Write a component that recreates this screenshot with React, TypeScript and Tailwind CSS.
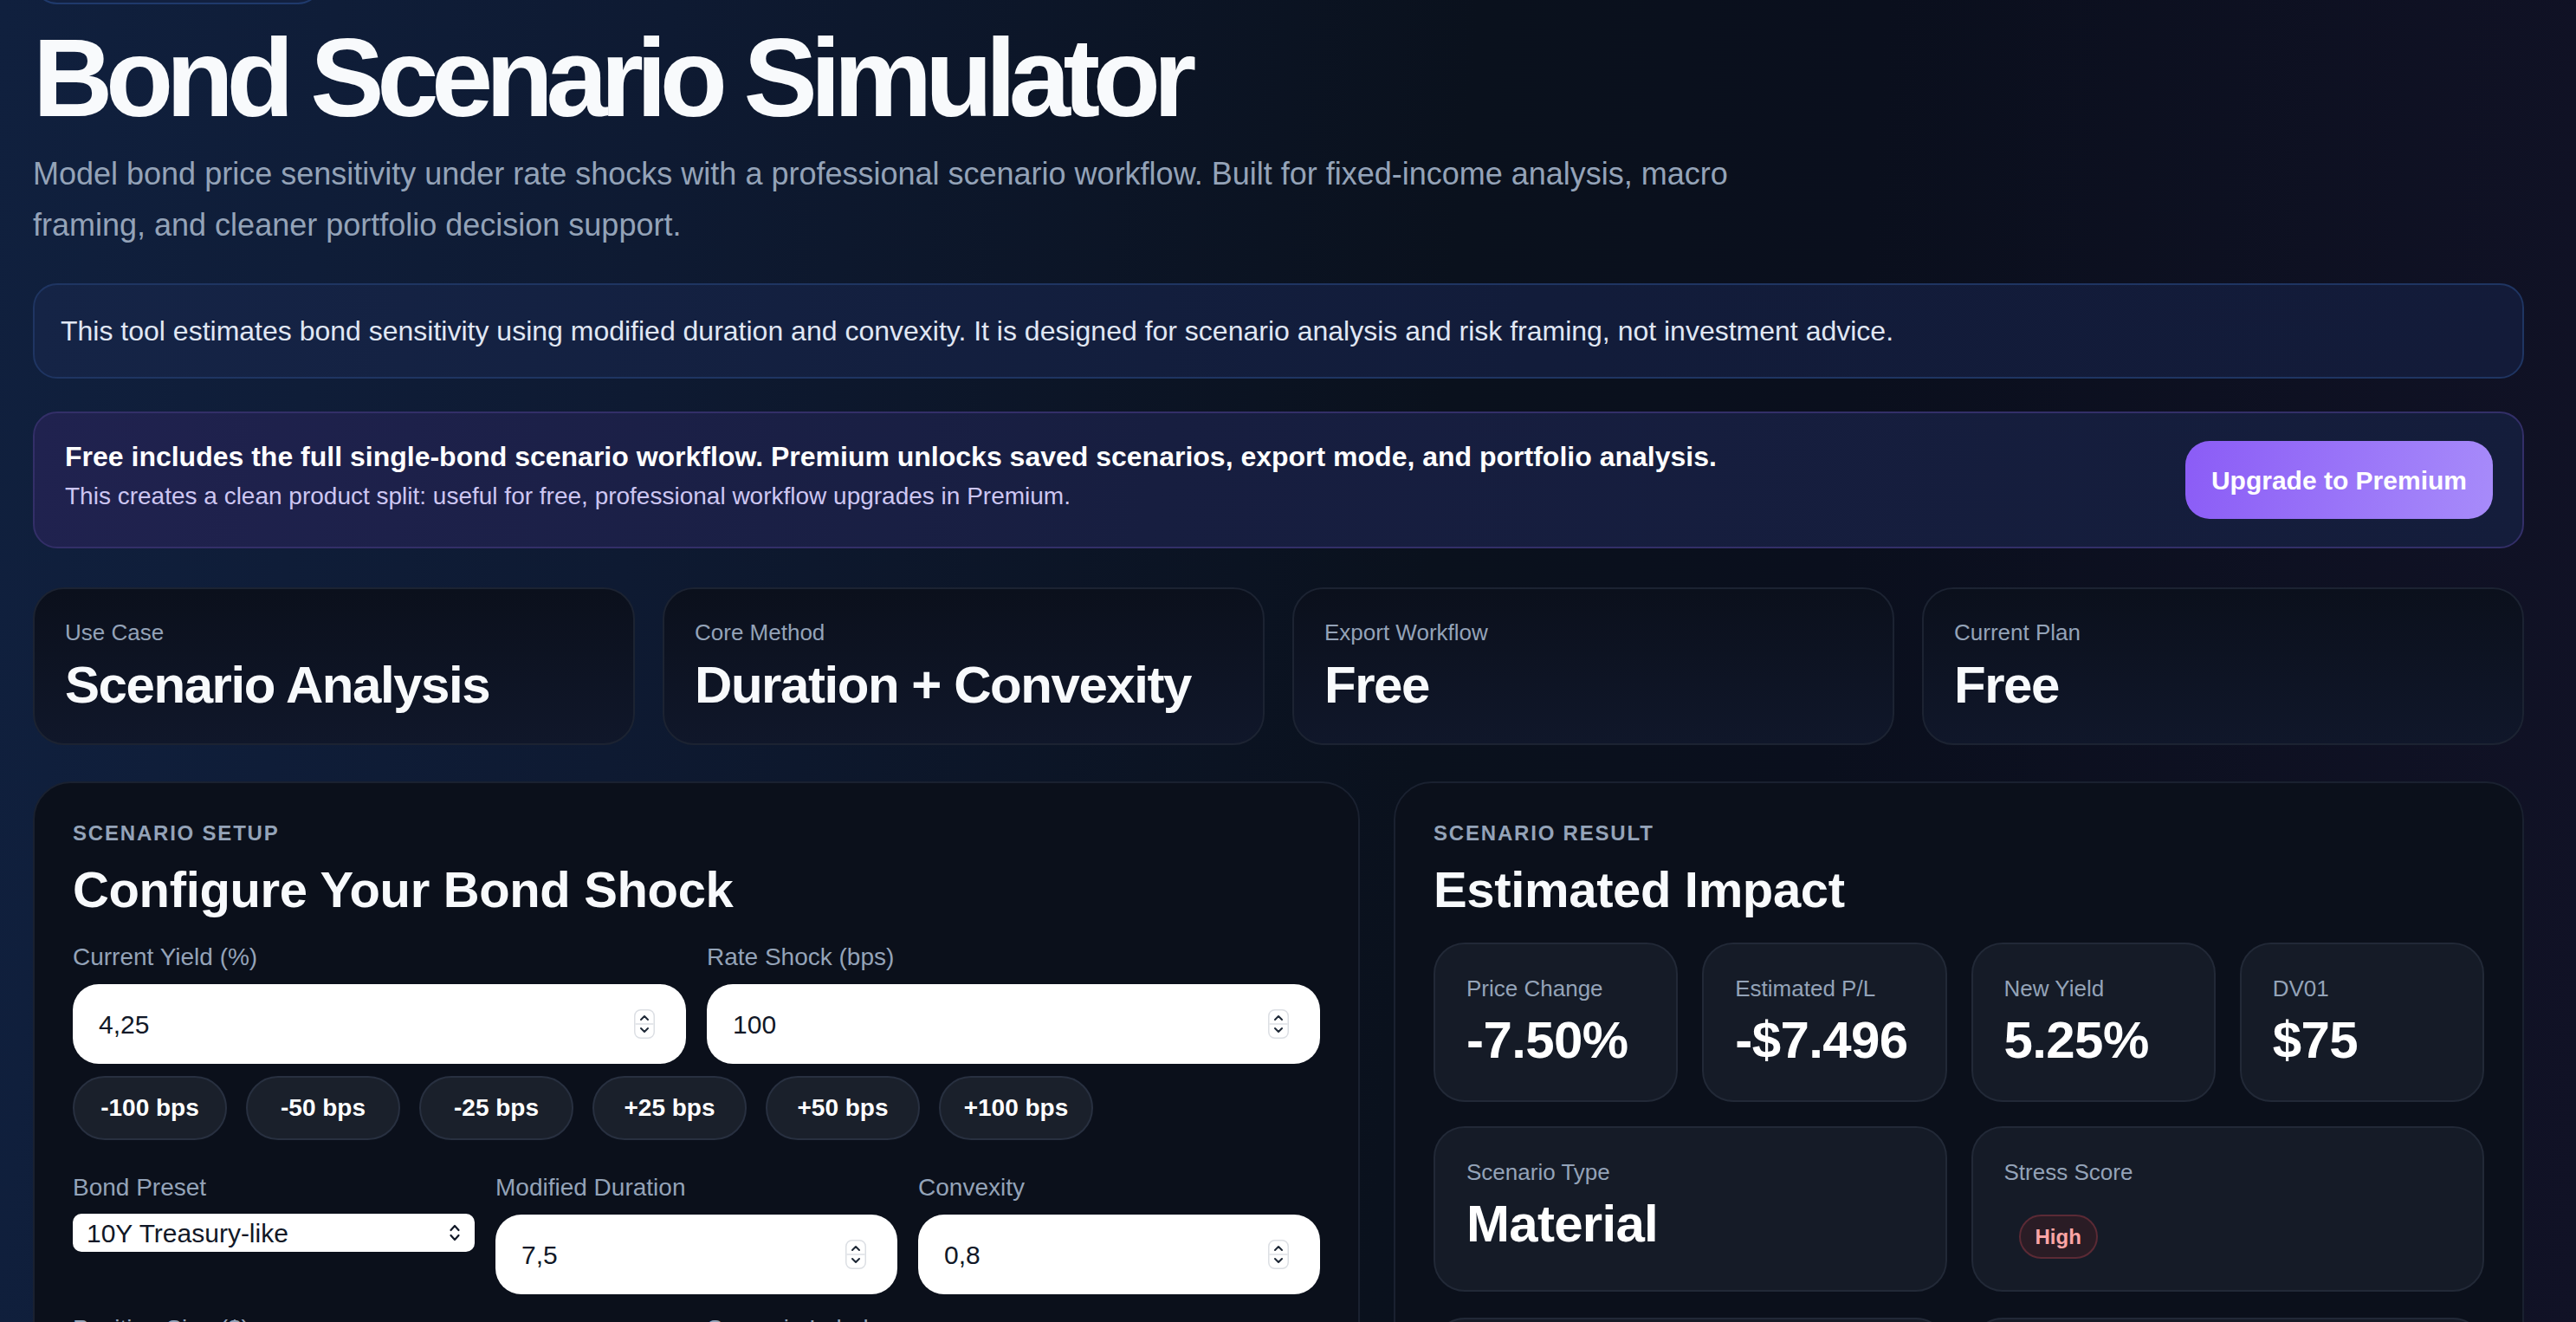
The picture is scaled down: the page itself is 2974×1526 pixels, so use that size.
import React from "react";

const stats = [
  { label: "Use Case", value: "Scenario Analysis" },
  { label: "Core Method", value: "Duration + Convexity" },
  { label: "Export Workflow", value: "Free" },
  { label: "Current Plan", value: "Free" },
];

const shocks = ["-100 bps", "-50 bps", "-25 bps", "+25 bps", "+50 bps", "+100 bps"];

const metrics = [
  { label: "Price Change", value: "-7.50%" },
  { label: "Estimated P/L", value: "-$7.496" },
  { label: "New Yield", value: "5.25%" },
  { label: "DV01", value: "$75" },
];

function Spinner() {
  return (
    <svg width="24" height="34" viewBox="0 0 24 34" className="shrink-0">
      <rect x="0.75" y="0.75" width="22.5" height="32.5" rx="7" fill="#fff" stroke="#dcdfe4" strokeWidth="1.5" />
      <line x1="1.5" y1="17" x2="22.5" y2="17" stroke="#dcdfe4" strokeWidth="1.5" />
      <path d="M8 12l4-4 4 4" fill="none" stroke="#1f2937" strokeWidth="2" strokeLinecap="round" strokeLinejoin="round" />
      <path d="M8 22l4 4 4-4" fill="none" stroke="#1f2937" strokeWidth="2" strokeLinecap="round" strokeLinejoin="round" />
    </svg>
  );
}

function SelectChevron() {
  return (
    <svg width="16" height="24" viewBox="0 0 16 24" className="shrink-0">
      <path d="M3.5 9l4.5-5 4.5 5" fill="none" stroke="#111827" strokeWidth="2.2" strokeLinecap="round" strokeLinejoin="round" />
      <path d="M3.5 15l4.5 5 4.5-5" fill="none" stroke="#111827" strokeWidth="2.2" strokeLinecap="round" strokeLinejoin="round" />
    </svg>
  );
}

function FieldLabel({ children }: { children: React.ReactNode }) {
  return <span className="text-[28px] leading-[39px] text-[#94a3b8]">{children}</span>;
}

function NumberField({ label, value }: { label: string; value: string }) {
  return (
    <label className="flex flex-col">
      <FieldLabel>{label}</FieldLabel>
      <div className="mt-[12px] flex h-[92px] items-center rounded-[30px] bg-white pl-[30px] pr-[36px]">
        <input
          defaultValue={value}
          className="min-w-0 flex-1 bg-transparent text-[30px] text-[#111827] outline-none"
        />
        <Spinner />
      </div>
    </label>
  );
}

function Eyebrow({ children }: { children: React.ReactNode }) {
  return (
    <div className="text-[24px] font-bold uppercase leading-[36px] tracking-[0.075em] text-[#94a3b8]">
      {children}
    </div>
  );
}

function PanelTitle({ children }: { children: React.ReactNode }) {
  return (
    <h2 className="mt-[12px] text-[58px] font-bold leading-[70px] tracking-[-0.006em] text-[#f8fafc]">
      {children}
    </h2>
  );
}

function MetricCard({ label, children }: { label: string; children: React.ReactNode }) {
  return (
    <div className="rounded-[36px] border-2 border-[#222937] bg-[#151b27] px-[36px] pt-[33px] pb-[36px]">
      <div className="text-[26px] leading-[36px] text-[#94a3b8]">{label}</div>
      {children}
    </div>
  );
}

export default function App() {
  return (
    <div className="h-[1526px] overflow-hidden bg-[linear-gradient(95deg,#10203e_0%,#0e1a32_25%,#0a111d_55%,#0a0f1d_70%,#111226_100%)] font-['Liberation_Sans',Arial,Helvetica,sans-serif]">
      <div className="ml-[38px] w-[2876px]">
        {/* Top pill, mostly scrolled out of view */}
        <div className="-mt-[51px] h-[56px] w-[334px] rounded-full border-2 border-[#1f3a6c] bg-[#12203f]" />

        {/* Header */}
        <h1 className="mt-[21px] text-[128px] font-bold leading-[128px] tracking-[-0.066em] text-[#f8fafc]">
          Bond Scenario Simulator
        </h1>
        <p className="mt-[17px] max-w-[2050px] text-[36px] leading-[59px] text-[#94a3b8]">
          Model bond price sensitivity under rate shocks with a professional scenario workflow. Built for
          fixed-income analysis, macro framing, and cleaner portfolio decision support.
        </p>

        {/* Disclaimer */}
        <div className="mt-[38px] rounded-[28px] border-2 border-[#1f3562] bg-[linear-gradient(95deg,#152446,#121c3a_60%,#131b39)] px-[30px] py-[29px] text-[32px] leading-[48px] text-[#e0e7f4]">
          This tool estimates bond sensitivity using modified duration and convexity. It is designed for
          scenario analysis and risk framing, not investment advice.
        </div>

        {/* Premium banner */}
        <div className="mt-[38px] flex items-center justify-between rounded-[28px] border-2 border-[#332f68] bg-[linear-gradient(100deg,#20224f_0%,#171e40_45%,#141d3b_100%)] py-[32px] pl-[35px] pr-[34px]">
          <div className="-mt-[10px]">
            <div className="text-[32px] font-bold leading-[42px] text-white">
              Free includes the full single-bond scenario workflow. Premium unlocks saved scenarios, export
              mode, and portfolio analysis.
            </div>
            <div className="mt-[6px] text-[28px] leading-[38px] text-[#cdc6f2]">
              This creates a clean product split: useful for free, professional workflow upgrades in Premium.
            </div>
          </div>
          <button className="h-[90px] rounded-[28px] bg-[linear-gradient(100deg,#8b5cf6,#a78bfa)] px-[30px] text-[30px] font-bold text-white">
            Upgrade to Premium
          </button>
        </div>

        {/* Summary stats */}
        <div className="mt-[45px] grid grid-cols-4 gap-[32px]">
          {stats.map(s => (
            <div
              key={s.label}
              className="rounded-[36px] border-2 border-[#1c2332] bg-[linear-gradient(180deg,#0b101c,#10172a)] px-[35px] pt-[32px] pb-[34px]"
            >
              <div className="text-[26px] leading-[36px] text-[#94a3b8]">{s.label}</div>
              <div className="mt-[10px] text-[60px] font-bold leading-[66px] tracking-[-0.024em] text-[#f8fafc]">
                {s.value}
              </div>
            </div>
          ))}
        </div>

        {/* Main panels */}
        <div className="mt-[42px] grid grid-cols-[1.174fr_1fr] gap-[39px]">
          {/* Setup */}
          <section className="h-[800px] rounded-[44px] border-2 border-[#1a2130] bg-[#0b101b] px-[44px] pt-[40px]">
            <Eyebrow>Scenario Setup</Eyebrow>
            <PanelTitle>Configure Your Bond Shock</PanelTitle>

            <div className="mt-[23px] grid grid-cols-2 gap-x-[24px]">
              <NumberField label="Current Yield (%)" value="4,25" />
              <NumberField label="Rate Shock (bps)" value="100" />
            </div>

            <div className="mt-[14px] flex gap-[22px]">
              {shocks.map(s => (
                <button
                  key={s}
                  className="h-[74px] w-[178px] rounded-full border-2 border-[#283040] bg-[#1a202b] text-[28px] font-bold text-white"
                >
                  {s}
                </button>
              ))}
            </div>

            <div className="mt-[35px] grid grid-cols-3 items-start gap-x-[24px]">
              <label className="flex flex-col">
                <FieldLabel>Bond Preset</FieldLabel>
                <div className="mt-[11px] flex h-[44px] items-center rounded-[10px] bg-white pl-[16px] pr-[15px]">
                  <select className="min-w-0 flex-1 appearance-none bg-transparent text-[30px] text-[#111827] outline-none">
                    <option>10Y Treasury-like</option>
                    <option>2Y Treasury-like</option>
                    <option>30Y Treasury-like</option>
                  </select>
                  <SelectChevron />
                </div>
              </label>
              <NumberField label="Modified Duration" value="7,5" />
              <NumberField label="Convexity" value="0,8" />
            </div>

            <div className="mt-[20px] grid grid-cols-2 gap-x-[24px]">
              <NumberField label="Position Size ($)" value="100000" />
              <NumberField label="Scenario Label" value="Base case" />
            </div>
          </section>

          {/* Result */}
          <section className="h-[800px] rounded-[44px] border-2 border-[#1a2130] bg-[#0b101b] px-[44px] pt-[40px]">
            <Eyebrow>Scenario Result</Eyebrow>
            <PanelTitle>Estimated Impact</PanelTitle>

            <div className="mt-[26px] grid grid-cols-4 gap-[28px]">
              {metrics.map(m => (
                <MetricCard key={m.label} label={m.label}>
                  <div className="mt-[9px] text-[60px] font-bold leading-[66px] tracking-[-0.01em] text-white">
                    {m.value}
                  </div>
                </MetricCard>
              ))}
            </div>

            <div className="mt-[28px] grid grid-cols-2 gap-[28px]">
              <MetricCard label="Scenario Type">
                <div className="mt-[9px] text-[60px] font-bold leading-[66px] tracking-[-0.012em] text-white">
                  Material
                </div>
              </MetricCard>
              <MetricCard label="Stress Score">
                <div className="ml-[17px] mt-[31px] flex">
                  <span className="flex h-[51px] items-center rounded-full border-2 border-[#5b2a35] bg-[#2a1c25] px-[17px] text-[24px] font-bold text-[#fca5a5]">
                    High
                  </span>
                </div>
              </MetricCard>
            </div>

            <div className="mt-[30px] grid grid-cols-2 gap-[28px]">
              <MetricCard label="Price Before">
                <div className="mt-[9px] text-[60px] font-bold leading-[66px] text-white">100.00</div>
              </MetricCard>
              <MetricCard label="Price After">
                <div className="mt-[9px] text-[60px] font-bold leading-[66px] text-white">92.50</div>
              </MetricCard>
            </div>
          </section>
        </div>
      </div>
    </div>
  );
}
